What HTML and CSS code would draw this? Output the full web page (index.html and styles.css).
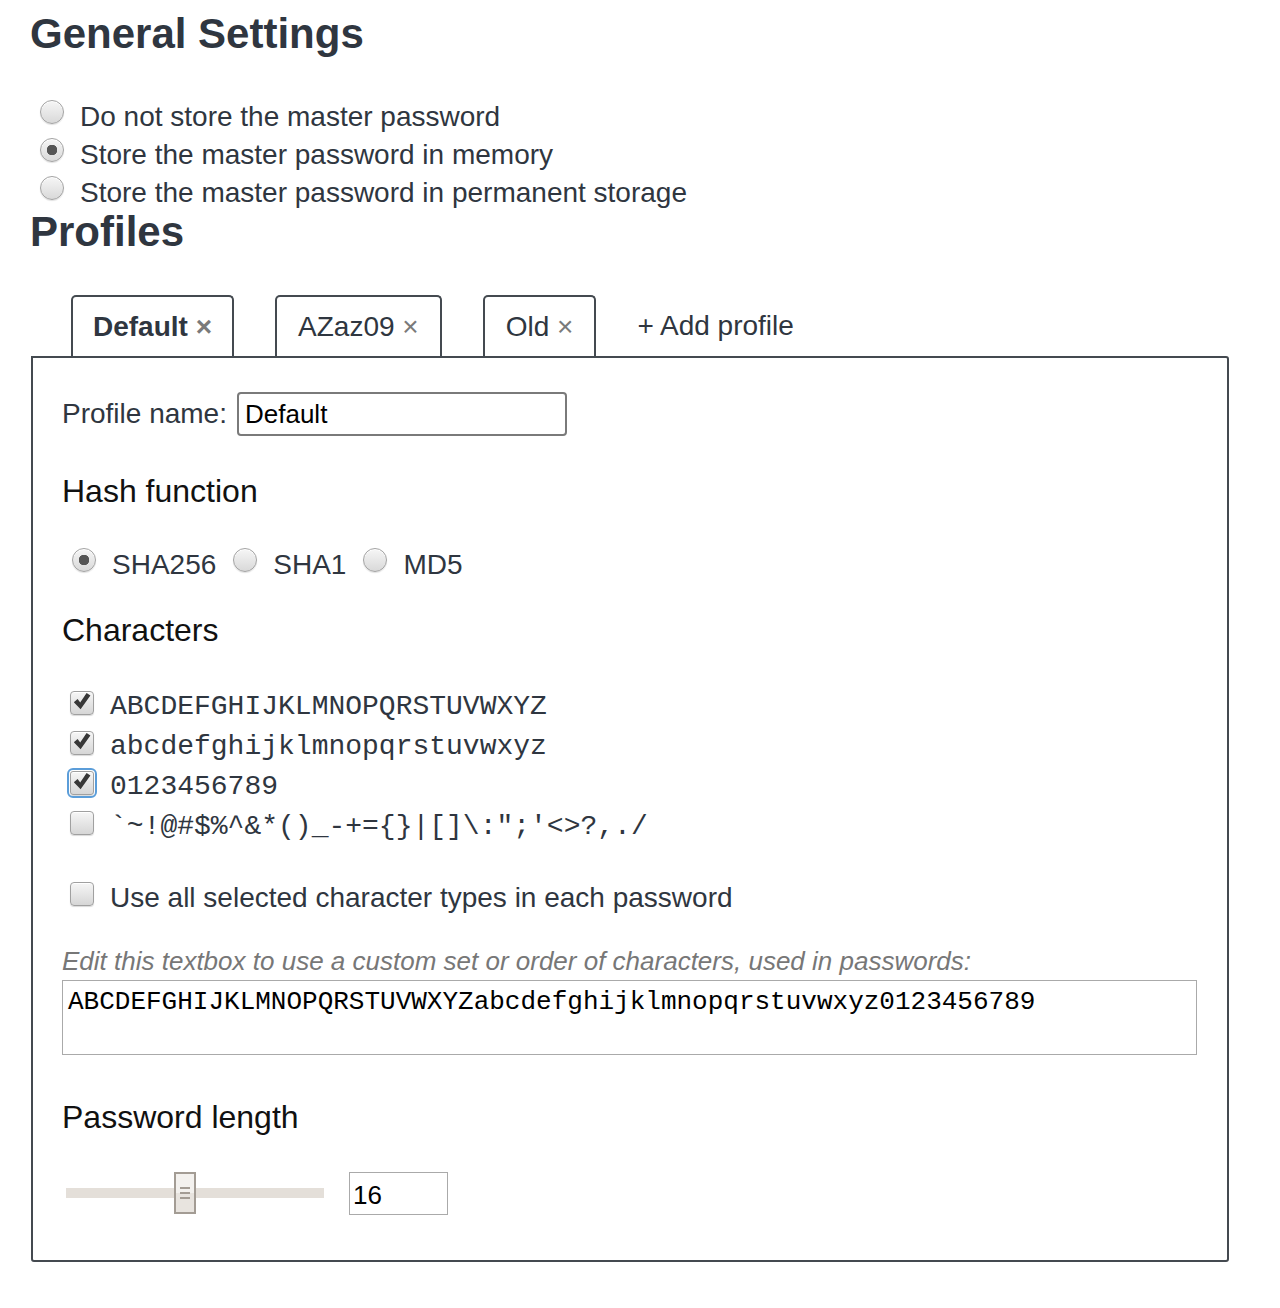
FILE: index.html
```html
<!DOCTYPE html>
<html>
<head>
<meta charset="utf-8">
<link rel="stylesheet" href="styles.css">
</head>
<body>
<div class="page">
  <h1 class="title">General Settings</h1>
  <div class="store-list">
    <label class="store-row"><input type="radio" name="store" class="radio"><span>Do not store the master password</span></label>
    <label class="store-row"><input type="radio" name="store" class="radio" checked><span>Store the master password in memory</span></label>
    <label class="store-row"><input type="radio" name="store" class="radio"><span>Store the master password in permanent storage</span></label>
  </div>
  <h1 class="title title-profiles">Profiles</h1>

  <div class="tabs">
    <div class="tab tab-active">Default <span class="close">×</span></div>
    <div class="tab">AZaz09 <span class="close">×</span></div>
    <div class="tab">Old <span class="close">×</span></div>
    <div class="add-profile">+ Add profile</div>
  </div>

  <div class="panel">
    <div class="name-row">
      <label class="name-label">Profile name:</label>
      <input type="text" class="name-input" value="Default">
    </div>

    <h3 class="section">Hash function</h3>
    <div class="hash-row">
      <label class="hash-item"><input type="radio" name="hash" class="radio" checked><span>SHA256</span></label>
      <label class="hash-item"><input type="radio" name="hash" class="radio"><span>SHA1</span></label>
      <label class="hash-item"><input type="radio" name="hash" class="radio"><span>MD5</span></label>
    </div>

    <h3 class="section section-chars">Characters</h3>
    <div class="char-list">
      <label class="char-row"><input type="checkbox" class="check" checked><span class="mono">ABCDEFGHIJKLMNOPQRSTUVWXYZ</span></label>
      <label class="char-row"><input type="checkbox" class="check" checked><span class="mono">abcdefghijklmnopqrstuvwxyz</span></label>
      <label class="char-row"><input type="checkbox" class="check check-focus" checked><span class="mono">0123456789</span></label>
      <label class="char-row"><input type="checkbox" class="check"><span class="mono">`~!@#$%^&amp;*()_-+={}|[]\:";'&lt;&gt;?,./</span></label>
    </div>

    <label class="char-row use-all"><input type="checkbox" class="check"><span>Use all selected character types in each password</span></label>

    <p class="hint">Edit this textbox to use a custom set or order of characters, used in passwords:</p>
    <textarea class="charset">ABCDEFGHIJKLMNOPQRSTUVWXYZabcdefghijklmnopqrstuvwxyz0123456789</textarea>

    <h3 class="section section-length">Password length</h3>
    <div class="length-row">
      <div class="slider">
        <div class="track"></div>
        <div class="thumb"><span class="grip"></span><span class="grip"></span><span class="grip"></span></div>
      </div>
      <input type="text" class="length-input" value="16">
    </div>
  </div>
</div>
</body>
</html>
```

FILE: styles.css
```css
html, body {
  margin: 0;
  padding: 0;
  background: #ffffff;
}

body {
  font-family: "Liberation Sans", Arial, sans-serif;
  color: #2f3640;
  font-size: 28px;
}

.page {
  padding: 0 0 0 30px;
  width: 1200px;
}

.title {
  font-size: 42px;
  font-weight: bold;
  line-height: 48px;
  margin: 10px 0 0 0;
  color: #2f3640;
}

.store-list {
  margin-top: 40px;
  display: flex;
  flex-direction: column;
}

.store-row {
  display: flex;
  align-items: flex-start;
  height: 38px;
  line-height: 38px;
  padding-left: 10px;
}

.radio {
  -webkit-appearance: none;
  appearance: none;
  width: 24px;
  height: 24px;
  margin: 2px 16px 0 0;
  flex: 0 0 24px;
  border-radius: 50%;
  border: 1px solid #a3a3a3;
  box-sizing: border-box;
  background: linear-gradient(#f6f6f6, #d9d9d9);
  box-shadow: 0 1px 1px rgba(0,0,0,0.12), inset 0 1px 0 #ffffff;
}

.radio:checked {
  background: radial-gradient(circle at 50% 50%, #555555 0, #555555 5px, transparent 5.5px), linear-gradient(#f6f6f6, #d9d9d9);
}

.title-profiles {
  margin-top: -4px;
}

.tabs {
  display: flex;
  align-items: flex-end;
  margin-top: 39px;
  padding-left: 41px;
  gap: 41px;
}

.tab {
  height: 61px;
  line-height: 59px;
  box-sizing: border-box;
  border: 2px solid #444a50;
  border-bottom: none;
  border-radius: 5px 5px 0 0;
  padding: 0 21px;
  font-size: 28px;
  color: #2f3640;
  white-space: nowrap;
}

.tab-active {
  font-weight: bold;
  padding: 0 20px;
}

.close {
  color: #7a7a7a;
  font-weight: normal;
}

.tab-active .close {
  font-weight: bold;
}

.add-profile {
  height: 61px;
  line-height: 61px;
  font-size: 28px;
  color: #2f3640;
}

.panel {
  margin-left: 1px;
  width: 1198px;
  box-sizing: border-box;
  border: 2px solid #444a50;
  border-radius: 0 3px 3px 3px;
  padding: 34px 29px 46px 29px;
}

.name-row {
  display: flex;
  align-items: center;
  height: 44px;
}

.name-label {
  font-size: 28px;
  color: #2f3640;
}

.name-input {
  margin-left: 10px;
  width: 330px;
  height: 44px;
  box-sizing: border-box;
  border: 2px solid #7a7a7a;
  border-radius: 4px;
  padding: 0 6px;
  font-family: "Liberation Sans", Arial, sans-serif;
  font-size: 26px;
  color: #000;
  outline: none;
}

.section {
  font-size: 32px;
  font-weight: normal;
  line-height: 37px;
  margin: 37px 0 0 0;
  color: #111111;
}

.hash-row {
  display: flex;
  margin-top: 36px;
  padding-left: 10px;
  height: 38px;
}

.hash-item {
  display: flex;
  align-items: flex-start;
  line-height: 38px;
  margin-right: 17px;
}

.hash-item .radio {
  margin-top: 2px;
}

.section-chars {
  margin-top: 28px;
}

.char-list {
  margin-top: 38px;
  display: flex;
  flex-direction: column;
}

.char-row {
  display: flex;
  align-items: flex-start;
  height: 40px;
  line-height: 40px;
  padding-left: 8px;
}

.mono {
  font-family: "Liberation Mono", "Courier New", monospace;
  font-size: 28px;
}

.check {
  -webkit-appearance: none;
  appearance: none;
  width: 24px;
  height: 24px;
  flex: 0 0 24px;
  margin: 4px 16px 0 0;
  box-sizing: border-box;
  border: 1px solid #a0a0a0;
  border-radius: 4px;
  background: linear-gradient(#f6f6f6, #d6d6d6);
  box-shadow: 0 1px 1px rgba(0,0,0,0.15), inset 0 1px 0 #ffffff;
}

.check:checked {
  background-image: url("data:image/svg+xml;utf8,<svg xmlns='http://www.w3.org/2000/svg' viewBox='0 0 24 24'><path d='M3.8 12.2 L7.6 9 L10.2 12.6 L16.6 3 L20.4 5.4 L10.6 19.2 Z' fill='%23383838'/></svg>"), linear-gradient(#f6f6f6, #d6d6d6);
  background-size: 24px 24px, 100% 100%;
  background-position: -1px -2px, 0 0;
  background-repeat: no-repeat;
}

.check-focus {
  outline: 2px solid #5b9dd9;
  outline-offset: 1px;
  border-radius: 3px;
}

.use-all {
  margin-top: 31px;
}

.hint {
  margin: 28px 0 0 0;
  font-size: 26px;
  font-style: italic;
  color: #777777;
  line-height: 30px;
}

.charset {
  display: block;
  margin-top: 4px;
  width: 1135px;
  height: 75px;
  box-sizing: border-box;
  border: 1px solid #aaaaaa;
  border-radius: 0;
  padding: 6px 5px;
  font-family: "Liberation Mono", "Courier New", monospace;
  font-size: 26px;
  line-height: 30px;
  color: #000000;
  resize: none;
  outline: none;
}

.section-length {
  margin-top: 44px;
}

.length-row {
  display: flex;
  align-items: center;
  margin-top: 36px;
  height: 42px;
  padding-left: 4px;
}

.slider {
  position: relative;
  width: 258px;
  height: 42px;
  display: flex;
  align-items: center;
}

.track {
  width: 100%;
  height: 10px;
  background: #e4dfd9;
}

.thumb {
  position: absolute;
  left: 108px;
  top: 0;
  width: 22px;
  height: 42px;
  box-sizing: border-box;
  border: 2px solid #a39c94;
  background: linear-gradient(#f3f1ee 0, #f3f1ee 50%, #e8e4df 50%, #e8e4df 100%);
  display: flex;
  flex-direction: column;
  align-items: center;
  justify-content: center;
  gap: 3px;
}

.grip {
  display: block;
  width: 10px;
  height: 2px;
  background: #a39c94;
}

.length-input {
  margin-left: 25px;
  width: 99px;
  height: 43px;
  box-sizing: border-box;
  border: 1px solid #aaaaaa;
  padding: 4px 3px 0 3px;
  font-family: "Liberation Sans", Arial, sans-serif;
  font-size: 26px;
  color: #000;
  outline: none;
}
```
